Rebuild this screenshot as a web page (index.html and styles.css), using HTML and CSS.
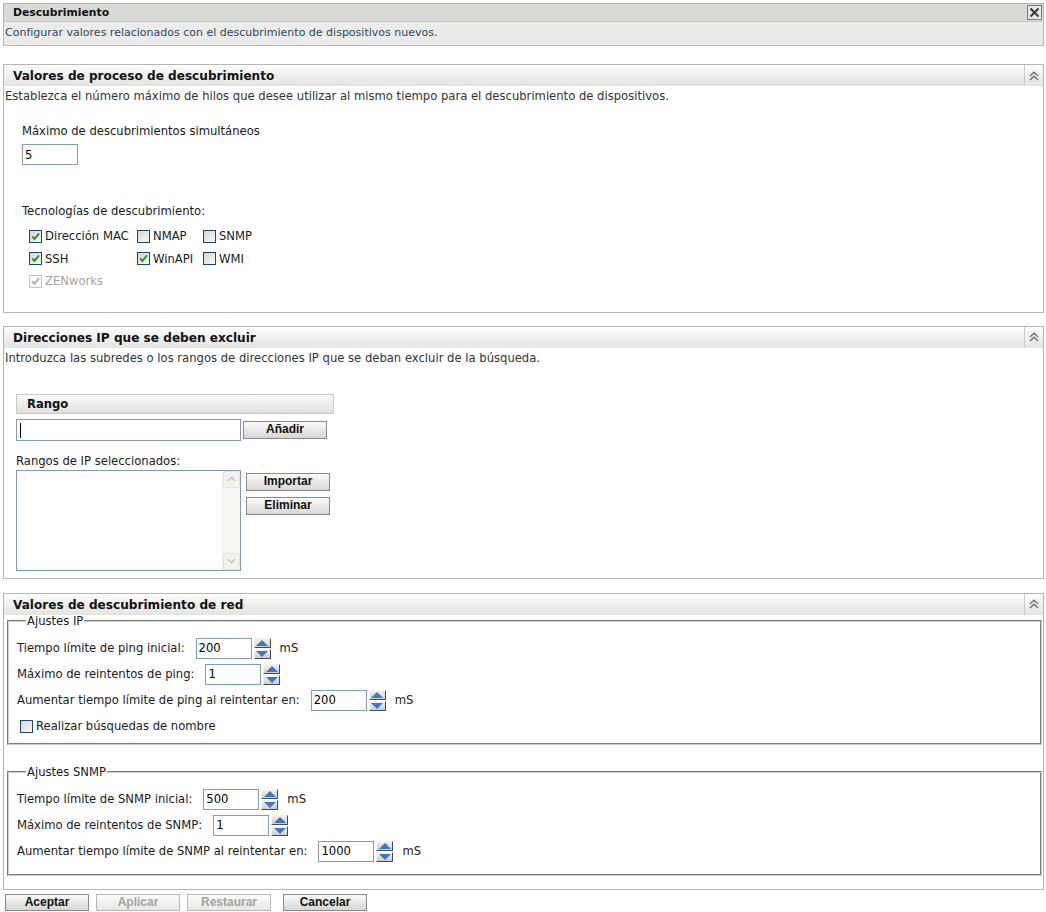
FILE: index.html
```html
<!DOCTYPE html>
<html lang="es">
<head>
<meta charset="utf-8">
<title>Descubrimiento</title>
<link rel="stylesheet" href="styles.css">
</head>
<body>
<div class="page">

  <section class="panel intro">
    <div class="intro-head">
      <span class="intro-title">Descubrimiento</span>
      <span class="close-btn"><svg width="11" height="11" viewBox="0 0 11 11"><path d="M1.5 1.5 L9.5 9.5 M9.5 1.5 L1.5 9.5" stroke="#3a3a3a" stroke-width="2"/></svg></span>
    </div>
    <div class="intro-desc">Configurar valores relacionados con el descubrimiento de dispositivos nuevos.</div>
  </section>

  <section class="panel sec sec-proc">
    <div class="sec-head">
      <span class="sec-title">Valores de proceso de descubrimiento</span>
      <span class="collapse"><svg width="10" height="10" viewBox="0 0 10 10"><path d="M1 5 L5 1.2 L9 5 M1 9 L5 5.2 L9 9" stroke="#6a6a6a" stroke-width="1.2" fill="none"/></svg></span>
    </div>
    <p class="sec-desc">Establezca el número máximo de hilos que desee utilizar al mismo tiempo para el descubrimiento de dispositivos.</p>
    <div class="proc-body">
      <div class="lbl max-lbl">Máximo de descubrimientos simultáneos</div>
      <input class="txt max-in" type="text" value="5">
      <div class="lbl tech-lbl">Tecnologías de descubrimiento:</div>
      <div class="tech-grid">
        <label class="chk"><span class="cb on"><svg width="9" height="9" viewBox="0 0 9 9"><path d="M1.2 4.3 L3.5 7 L8 1.4" stroke="#1f9d22" stroke-width="2" fill="none"/></svg></span>Dirección MAC</label>
        <label class="chk"><span class="cb"></span>NMAP</label>
        <label class="chk"><span class="cb"></span>SNMP</label>
        <label class="chk"><span class="cb on"><svg width="9" height="9" viewBox="0 0 9 9"><path d="M1.2 4.3 L3.5 7 L8 1.4" stroke="#1f9d22" stroke-width="2" fill="none"/></svg></span>SSH</label>
        <label class="chk"><span class="cb on"><svg width="9" height="9" viewBox="0 0 9 9"><path d="M1.2 4.3 L3.5 7 L8 1.4" stroke="#1f9d22" stroke-width="2" fill="none"/></svg></span>WinAPI</label>
        <label class="chk"><span class="cb"></span>WMI</label>
        <label class="chk disabled"><span class="cb dis"><svg width="9" height="9" viewBox="0 0 9 9"><path d="M1.2 4.3 L3.5 7 L8 1.4" stroke="#b4b4ac" stroke-width="2" fill="none"/></svg></span>ZENworks</label>
      </div>
    </div>
  </section>

  <section class="panel sec sec-ip">
    <div class="sec-head">
      <span class="sec-title">Direcciones IP que se deben excluir</span>
      <span class="collapse"><svg width="10" height="10" viewBox="0 0 10 10"><path d="M1 5 L5 1.2 L9 5 M1 9 L5 5.2 L9 9" stroke="#6a6a6a" stroke-width="1.2" fill="none"/></svg></span>
    </div>
    <p class="sec-desc">Introduzca las subredes o los rangos de direcciones IP que se deban excluir de la búsqueda.</p>
    <div class="ip-body">
      <div class="range-head">Rango</div>
      <div class="range-row">
        <div class="range-field"><span class="caret"></span></div>
        <button class="btn btn-add" type="button">Añadir</button>
      </div>
      <div class="lbl sel-lbl">Rangos de IP seleccionados:</div>
      <div class="list-row">
        <div class="listbox">
          <div class="list-items"></div>
          <div class="vscroll">
            <span class="sb-btn"><svg width="9" height="6" viewBox="0 0 9 6"><path d="M1 5 L4.5 1.5 L8 5" stroke="#c4c4bc" stroke-width="1.4" fill="none"/></svg></span>
            <span class="sb-track"></span>
            <span class="sb-btn"><svg width="9" height="6" viewBox="0 0 9 6"><path d="M1 1 L4.5 4.5 L8 1" stroke="#c4c4bc" stroke-width="1.4" fill="none"/></svg></span>
          </div>
        </div>
        <div class="list-btns">
          <button class="btn" type="button">Importar</button>
          <button class="btn" type="button">Eliminar</button>
        </div>
      </div>
    </div>
  </section>

  <section class="panel sec sec-net">
    <div class="sec-head">
      <span class="sec-title">Valores de descubrimiento de red</span>
      <span class="collapse"><svg width="10" height="10" viewBox="0 0 10 10"><path d="M1 5 L5 1.2 L9 5 M1 9 L5 5.2 L9 9" stroke="#6a6a6a" stroke-width="1.2" fill="none"/></svg></span>
    </div>
    <fieldset class="fs fs-ip">
      <legend>Ajustes IP</legend>
      <div class="frow"><span>Tiempo límite de ping inicial:</span><input class="txt num" type="text" value="200"><span class="spin"><span class="up"></span><span class="down"></span></span><span class="unit">mS</span></div>
      <div class="frow"><span>Máximo de reintentos de ping:</span><input class="txt num" type="text" value="1"><span class="spin"><span class="up"></span><span class="down"></span></span></div>
      <div class="frow"><span>Aumentar tiempo límite de ping al reintentar en:</span><input class="txt num" type="text" value="200"><span class="spin"><span class="up"></span><span class="down"></span></span><span class="unit">mS</span></div>
      <div class="frow crow"><label class="chk"><span class="cb"></span>Realizar búsquedas de nombre</label></div>
    </fieldset>
    <fieldset class="fs fs-snmp">
      <legend>Ajustes SNMP</legend>
      <div class="frow"><span>Tiempo límite de SNMP inicial:</span><input class="txt num" type="text" value="500"><span class="spin"><span class="up"></span><span class="down"></span></span><span class="unit">mS</span></div>
      <div class="frow"><span>Máximo de reintentos de SNMP:</span><input class="txt num" type="text" value="1"><span class="spin"><span class="up"></span><span class="down"></span></span></div>
      <div class="frow"><span>Aumentar tiempo límite de SNMP al reintentar en:</span><input class="txt num" type="text" value="1000"><span class="spin"><span class="up"></span><span class="down"></span></span><span class="unit">mS</span></div>
    </fieldset>
  </section>

  <div class="actions">
    <button class="btn act" type="button">Aceptar</button>
    <button class="btn act off" type="button">Aplicar</button>
    <button class="btn act off" type="button">Restaurar</button>
    <button class="btn act cancel" type="button">Cancelar</button>
  </div>
</div>
</body>
</html>
```

FILE: styles.css
```css
* { box-sizing: border-box; }

body {
  margin: 0;
  background: #fff;
  font-family: "DejaVu Sans", "Noto Sans", sans-serif;
  font-size: 11.6px;
  line-height: 16px;
  color: #1a1a1a;
}

.page {
  width: 1046px;
  padding: 3px 3px 0 3px;
}

.panel {
  border: 1px solid #b6b6b4;
  width: 1041px;
}

/* intro panel */
.intro-head {
  display: flex;
  align-items: center;
  justify-content: space-between;
  height: 18px;
  background: #d8dad6;
  border-bottom: 1px solid #c6c7c3;
  padding: 0 1px 0 9px;
}
.intro-title {
  font-weight: bold;
  font-size: 10.8px;
  color: #111;
}
.close-btn {
  width: 15px;
  height: 15px;
  border: 1px solid #7a7a78;
  background: #e6e6e4;
  display: flex;
  align-items: center;
  justify-content: center;
}
.intro-desc {
  background: #ebebe9;
  height: 23px;
  padding: 3px 0 0 1px;
  font-size: 11px;
  color: #2b4a5e;
}

/* section panels */
.sec { margin-top: 18px; }
.sec-ip { margin-top: 13px; }
.sec-net { margin-top: 14px; }

.sec-head {
  display: flex;
  height: 21px;
  background: linear-gradient(#fdfdfd, #e2e4e0);
}
.sec-title {
  flex: 1;
  font-weight: bold;
  font-size: 12.1px;
  padding: 3px 0 0 9px;
  color: #111;
}
.collapse {
  width: 19px;
  border-left: 1px solid #cbcbc9;
  display: flex;
  align-items: center;
  justify-content: center;
}

.sec-desc {
  margin: 2px 0 0 0;
  padding-left: 1px;
  color: #333;
}

.lbl { color: #1a1a1a; }

/* processing panel */
.proc-body {
  padding: 19px 0 19px 18px;
}
.txt {
  font-family: "DejaVu Sans", "Noto Sans", sans-serif;
  font-size: 11.6px;
  color: #000;
  border: 1px solid #7f9db9;
  background: #fff;
  padding: 0 2px;
  margin: 0;
  outline: none;
}
.max-in {
  display: block;
  width: 56px;
  height: 21px;
  margin-top: 5px;
}
.tech-lbl { margin-top: 38px; }
.tech-grid {
  display: grid;
  grid-template-columns: 108px 66px auto;
  grid-auto-rows: 22.5px;
  margin: 6px 0 0 7px;
  align-items: center;
}
.chk {
  display: flex;
  align-items: center;
  gap: 3px;
  color: #1a1a1a;
}
.chk.disabled { color: #a4a49c; }
.cb {
  width: 13px;
  height: 13px;
  border: 1px solid #1c4570;
  background: linear-gradient(135deg, #d6d6ce, #f9f9f7);
  display: inline-flex;
  align-items: center;
  justify-content: center;
  flex: none;
}
.cb.dis {
  border-color: #c3c3bb;
  background: #fbfbf9;
}

/* ip exclusion panel */
.ip-body {
  padding: 28px 0 7px 12px;
}
.range-head {
  width: 318px;
  height: 20px;
  border: 1px solid #c9c9c7;
  background: linear-gradient(#f9f9f8, #e0e0de);
  font-weight: bold;
  padding: 1px 0 0 10px;
  color: #111;
}
.range-row {
  display: flex;
  align-items: center;
  gap: 2px;
  margin-top: 5px;
}
.range-field {
  width: 225px;
  height: 22px;
  border: 1px solid #7f9db9;
  padding: 3px 0 0 3px;
}
.caret {
  display: block;
  width: 1px;
  height: 15px;
  background: #000;
}
.btn {
  font-family: "Liberation Sans", Arial, sans-serif;
  font-weight: bold;
  font-size: 12px;
  line-height: 15px;
  color: #111;
  height: 18px;
  width: 84px;
  padding: 0;
  border: 1px solid #8a8a88;
  background: linear-gradient(#fbfbfa, #d6d6d4);
  border-radius: 0;
  cursor: default;
}
.sel-lbl { margin-top: 12px; }
.list-row {
  display: flex;
  gap: 5px;
  margin-top: 1px;
}
.listbox {
  width: 225px;
  height: 101px;
  border: 1px solid #7f9db9;
  display: flex;
}
.list-items { flex: 1; }
.vscroll {
  width: 18px;
  background: #f6f6f2;
  display: flex;
  flex-direction: column;
  border-left: 1px solid #f0f0ea;
}
.sb-btn {
  height: 17px;
  border: 1px solid #e6e6de;
  background: #f3f3ee;
  border-radius: 2px;
  display: flex;
  align-items: center;
  justify-content: center;
}
.sb-track { flex: 1; }
.list-btns {
  display: flex;
  flex-direction: column;
  gap: 6px;
  padding-top: 3px;
}
.list-btns .btn { height: 18px; }

/* network panel */
.fs {
  margin: 0 1px 0 3px;
  border: 2px groove #cfcfc7;
  padding: 10px 6px 6px 8px;
}
.fs legend {
  font-size: 11.6px;
  line-height: 14px;
  padding: 0 1px;
  margin-left: 9px;
  color: #1a1a1a;
}
.fs-ip { margin-top: -1px; }
.fs-snmp { margin-top: 20px; padding-top: 10px; padding-bottom: 12px; margin-bottom: 13px; }

.frow {
  display: flex;
  align-items: center;
  height: 21px;
  margin-bottom: 5px;
  white-space: nowrap;
}
.frow:last-child { margin-bottom: 0; }
.frow .num {
  width: 56px;
  height: 21px;
  margin-left: 11px;
}
.crow { padding-left: 3px; margin-top: 0; }

.spin {
  display: inline-flex;
  flex-direction: column;
  gap: 1px;
  margin-left: 2px;
}
.spin span {
  width: 17px;
  height: 10px;
  border: 1px solid;
  border-color: #f4f4f4 #4a4a4a #4a4a4a #f4f4f4;
  background: linear-gradient(#f1f1f0, #cdcdcb);
  display: flex;
  align-items: center;
  justify-content: center;
}
.spin .up::after {
  content: "";
  border-left: 6px solid transparent;
  border-right: 6px solid transparent;
  border-bottom: 6px solid #3c79bf;
}
.spin .down::after {
  content: "";
  border-left: 6px solid transparent;
  border-right: 6px solid transparent;
  border-top: 6px solid #3c79bf;
}
.unit { margin-left: 9px; }

/* actions */
.actions {
  display: flex;
  padding: 4px 0 0 2px;
}
.act { height: 17px; }
.act + .act { margin-left: 7px; }
.act.cancel { margin-left: 12px; }
.act.off {
  color: #a3a3a1;
  border-color: #b9b9b7;
  background: linear-gradient(#fcfcfb, #e6e6e4);
}
```
